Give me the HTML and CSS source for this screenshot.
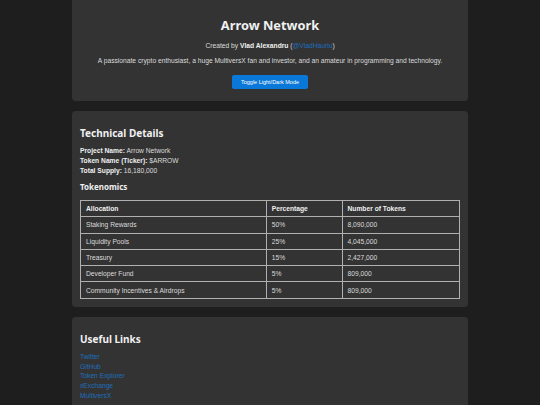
FILE: index.html
```html
<!DOCTYPE html>
<html lang="en">
<head>
    <meta charset="UTF-8">
    <meta name="viewport" content="width=device-width, initial-scale=1.0">
    <title>Arrow Network</title>
    <link rel="stylesheet" href="styles.css">
</head>
<body>
    <div class="container">
        <div class="card header">
            <h1>Arrow Network</h1>
            <p>Created by <strong>Vlad Alexandru</strong> (<a href="#">@VladHauriu</a>)</p>
            <p>A passionate crypto enthusiast, a huge MultiversX fan and investor, and an amateur in programming and technology.</p>
            <button id="themeToggle">Toggle Light/Dark Mode</button>
        </div>

        <div class="card">
            <h2>Technical Details</h2>
            <div class="details">
                <p><strong>Project Name:</strong> Arrow Network</p>
                <p><strong>Token Name (Ticker):</strong> $ARROW</p>
                <p><strong>Total Supply:</strong> 16,180,000</p>
            </div>
            <h3>Tokenomics</h3>
            <table>
                <tr>
                    <th class="col-alloc">Allocation</th>
                    <th class="col-pct">Percentage</th>
                    <th>Number of Tokens</th>
                </tr>
                <tr><td>Staking Rewards</td><td>50%</td><td>8,090,000</td></tr>
                <tr><td>Liquidity Pools</td><td>25%</td><td>4,045,000</td></tr>
                <tr><td>Treasury</td><td>15%</td><td>2,427,000</td></tr>
                <tr><td>Developer Fund</td><td>5%</td><td>809,000</td></tr>
                <tr><td>Community Incentives &amp; Airdrops</td><td>5%</td><td>809,000</td></tr>
            </table>
        </div>

        <div class="card">
            <h2>Useful Links</h2>
            <ul class="links">
                <li><a href="#">Twitter</a></li>
                <li><a href="#">GitHub</a></li>
                <li><a href="#">Token Explorer</a></li>
                <li><a href="#">xExchange</a></li>
                <li><a href="#">MultiversX</a></li>
            </ul>
        </div>
    </div>

    <script>
        // Switch between dark and light themes
        const toggle = document.getElementById('themeToggle');
        toggle.addEventListener('click', () => {
            document.body.classList.toggle('light');
        });
    </script>
</body>
</html>
```

FILE: styles.css
```css
body {
    font-family: "Liberation Sans", Arial, sans-serif;
    font-size: 6.7px;
    margin: 0;
    background-color: #1e1e1e;
    color: #dcdcdc;
}
body.light {
    background-color: #f5f5f5;
    color: #222;
}
.container {
    width: 396px;
    margin: 0 auto;
}
.card {
    background: #333333;
    padding: 8px 8px 8px;
    margin-bottom: 10px;
    border-radius: 4px;
}
body.light .card {
    background: white;
}
.header {
    text-align: center;
    padding-top: 8px;
    padding-bottom: 12px;
    border-top-left-radius: 0;
    border-top-right-radius: 0;
}
h1, h2, h3 {
    font-family: "Noto Sans", "Open Sans", sans-serif;
    color: #f0f0f0;
    font-weight: bold;
}
h1 {
    font-size: 12.8px;
    line-height: 20px;
    margin: 7px 0 6px;
}
h2 {
    font-size: 10px;
    line-height: 14px;
    margin: 7px 0 6px;
}
h3 {
    font-size: 8px;
    line-height: 10px;
    margin: 6px 0 8px;
}
p {
    margin: 0;
    line-height: 10px;
}
.header p {
    margin-bottom: 5px;
}
strong {
    color: #f0f0f0;
}
a {
    color: #1d6fbd;
    text-decoration: none;
}
button {
    margin-top: 4px;
    background-color: #0a78d8;
    color: white;
    border: none;
    border-radius: 2px;
    font-family: "Liberation Sans", Arial, sans-serif;
    font-size: 5.5px;
    width: 76px;
    height: 14px;
    padding: 0;
    cursor: pointer;
}
table {
    width: 100%;
    border-collapse: collapse;
}
th, td {
    border: 1px solid #b0b0b0;
    text-align: left;
    padding: 0 5px;
    height: 15.3px;
    font-size: 6.7px;
}
th {
    color: #f0f0f0;
}
.col-alloc {
    width: 49%;
}
.col-pct {
    width: 20%;
}
.links {
    list-style: none;
    margin: 0;
    padding: 0;
}
.links li {
    line-height: 9.8px;
}
```
